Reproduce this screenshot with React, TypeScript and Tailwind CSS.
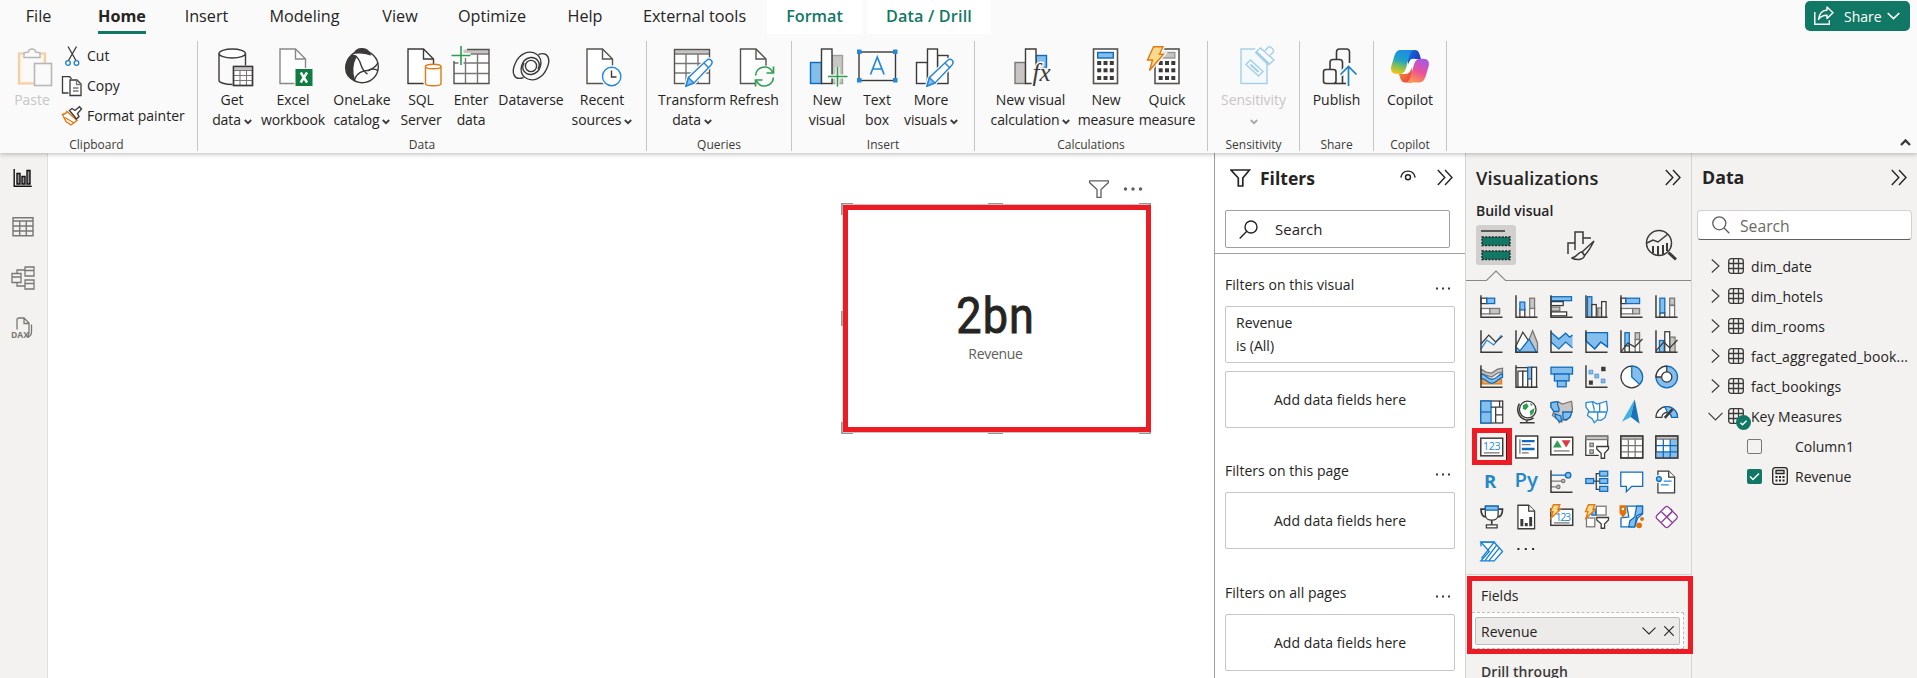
import React from "react";

const DK = "#3b3a38";
const GR = "#797775";
const LG = "#c8c6c4";
const BL = "#0f6cbd";
const LB = "#83beec";
const GN = "#117865";

type Kids = { children: React.ReactNode };

/* ---------- ribbon icons (40 x 40) ---------- */
const Big = ({ children }: Kids) => (
  <svg className="block h-10 w-10 shrink-0 overflow-visible" viewBox="0 0 40 40" fill="none" stroke={DK} strokeWidth="1.4">
    {children}
  </svg>
);

const Doc = ({ x = 6, s = "#55534f" }: { x?: number; s?: string }) => (
  <g transform={`translate(${x} 0)`} stroke={s}>
    <path d="M1 3h15.500l10 10v24.500h-25.500z" fill="#fff" />
    <path d="M16.500 3v10h10" />
  </g>
);

const Pencil = ({ x = 0 }: { x?: number }) => (
  <g transform={`translate(${x} 0)`} stroke="#2488d8" strokeWidth="1.4">
    <path d="M14 40l2.500-8.500L34.500 14.500c3.500-3 7.500 1 4.500 4.500L22 37z" fill="#fff" stroke="#fafafa" strokeWidth="4" />
    <path d="M14 40l2.500-8.500L34.500 14.500c3.500-3 7.500 1 4.500 4.500L22 37z" fill="#fff" />
    <path d="M14 40l2.500-8.500L22 37z" fill={LB} />
    <path d="M32 17l5 5" />
  </g>
);

const GetData = () => (
  <Big>
    <path d="M7 7.500v27c0 2 6 4 13.500 4" />
    <path d="M33.500 7.500v12" />
    <ellipse cx="20.250" cy="7.500" rx="13.250" ry="4.500" fill="#fff" />
    <rect x="21.500" y="20.500" width="19" height="19" fill="#fff" />
    <path d="M22 21h18v3.500h-18z" fill={LG} stroke="none" />
    <path d="M21.500 24.500h19M21.500 29.500h19M21.500 34.500h19M28 24.500v15M34.500 24.500v15" stroke={GR} strokeWidth="1.100" />
    <rect x="21.500" y="20.500" width="19" height="19" />
  </Big>
);
const Excel = () => (
  <Big>
    <Doc x={6} s="#8a8886" />
    <rect x="22" y="22.500" width="18" height="18" rx="1" fill="#107c41" stroke="#fafafa" strokeWidth="1" />
    <path d="M27.700 26.500l6.300 10M34 26.500l-6.300 10" stroke="#fff" strokeWidth="2.400" />
  </Big>
);
const OneLake = () => (
  <Big>
    <circle cx="20.300" cy="20.700" r="16" fill="#fff" stroke={DK} />
    <path d="M12.500 7C15 1 26 1 28 8.500c-5-2-10-2-15.500-1.500z" fill={DK} stroke={DK} />
    <path d="M11 9C1 15 1 30 12.500 34.500c-3-8-2-17 1.500-24z" fill={DK} stroke={DK} />
    <path d="M13 9.500c4 3 5 6 6 9.500s4 8 6.500 9" />
    <path d="M12.500 34c2-7 9-10 14-9.500 5-2 8-4 9.500-8" />
    <path d="M26 24.500c3-2 6-2 10 0" />
  </Big>
);
const Sql = () => (
  <Big>
    <Doc x={6} s="#3b3a38" />
    <path d="M24.500 20.500v17c0 3 15.500 3 15.500 0v-17z" fill="#fff" stroke="#fafafa" strokeWidth="4" />
    <path d="M24.500 20.500v17c0 3 15.500 3 15.500 0v-17" fill="#fff" stroke="#e07a14" />
    <ellipse cx="32.250" cy="20.500" rx="7.750" ry="2.300" fill="#fff" stroke="#e07a14" />
  </Big>
);
const EnterData = () => (
  <Big>
    <path d="M3 3.500h35v34h-35z" fill="#fff" stroke="none" />
    <path d="M12 3.500h26v4.500h-26z" fill={LG} stroke="none" />
    <path d="M3 17h35M3 27.500h35M12 8h26M14.500 12v25.500M26.500 8v29.500" stroke={GR} />
    <path d="M3 15v22.500h35V3.500H16" stroke="#55534f" />
    <path d="M10 0v19M0 9.500h19.500" stroke="#fafafa" strokeWidth="5" />
    <path d="M10 0v19M.500 9.500h19" stroke="#2f9e50" strokeWidth="1.600" />
  </Big>
);
const Dataverse = () => (
  <Big>
    <g strokeWidth="1.400">
      <circle cx="20" cy="20" r="5.600" />
      <path d="M12.500 31.500C3 35 0 27 4 18 8 8 18 3 26 8.500 33 14 30 27 20.500 28.500 14 29 9.500 23 13 17" />
      <path d="M27.500 8.500C37 5 40 13 36 22 32 32 22 37 14 31.500 7 26 10 13 19.500 11.500 26 11 30.500 17 27 23" />
    </g>
  </Big>
);
const Recent = () => (
  <Big>
    <Doc x={4} s="#55534f" />
    <circle cx="29.700" cy="30.500" r="9.200" fill="#fff" stroke="#fafafa" strokeWidth="4" />
    <circle cx="29.700" cy="30.500" r="9.200" fill="#fff" stroke="#2488d8" />
    <path d="M29.500 24.500v6.500h5" />
  </Big>
);
const Transform = () => (
  <Big>
    <path d="M2.500 3.500h35v34h-35z" fill="#fff" stroke="none" />
    <path d="M2.500 3.500h35V8h-35z" fill={LG} stroke="none" />
    <path d="M2.500 8h35M2.500 17.500h35M2.500 27h35M14 8v29.500M26 8v29.500" stroke={GR} />
    <rect x="2.500" y="3.500" width="35" height="34" stroke="#55534f" />
    <Pencil />
  </Big>
);
const Refresh = () => (
  <Big>
    <Doc x={5.500} s="#55534f" />
    <circle cx="30.500" cy="30.500" r="11" fill="#fafafa" stroke="none" />
    <g stroke="#2f9e50" strokeWidth="1.700">
      <path d="M21.700 29.500c0-9 13-12 17-3M39.300 31.500c0 9-13 12-17 3" />
      <path d="M39.500 20.500v6.500h-7M21.500 40.500V34h7" />
    </g>
  </Big>
);
const NewVisual = () => (
  <Big>
    <rect x="25" y="9.500" width="10.500" height="28" fill={LG} stroke="#a19f9d" />
    <rect x="3.500" y="16.500" width="11" height="21" fill={LB} stroke={BL} />
    <rect x="14.500" y="3" width="10.500" height="34.500" fill="#fff" />
    <path d="M30.500 21v19.500M21 30.500h19.500" stroke="#fafafa" strokeWidth="4" />
    <path d="M30.500 21v19.500M21 30.500h19.500" stroke="#2f9e50" strokeWidth="1.600" />
  </Big>
);
const TextBox = () => (
  <Big>
    <rect x="2" y="6" width="36.500" height="28.500" />
    <path d="M13.500 28.500l6.800-17.500 6.800 17.500M15.700 23h9.200" stroke="#2488d8" strokeWidth="1.700" />
    <path d="M0 3.500h4.500v4.500h-4.500zM36 3.500h4.500v4.500h-4.500zM0 32h4.500v4.500h-4.500zM36 32h4.500v4.500h-4.500z" fill="#2488d8" stroke="none" />
  </Big>
);
const MoreVisuals = () => (
  <Big>
    <rect x="5.500" y="16.500" width="11" height="21" fill="#fff" />
    <rect x="26.500" y="9.500" width="10.500" height="28" fill="#fff" />
    <rect x="16.500" y="3" width="10" height="34.500" fill="#fff" />
    <Pencil x={2} />
  </Big>
);
const VisualCalc = () => (
  <Big>
    <rect x="4" y="16.500" width="10.500" height="21" fill={LG} stroke={GR} />
    <rect x="25" y="9.500" width="10.500" height="12" fill={LB} stroke={BL} />
    <path d="M22 37.500h-7.500V3H25v17" fill="#fff" />
    <text x="21.500" y="34.500" fontFamily="'Liberation Serif', serif" fontStyle="italic" fontSize="25" fill={DK} stroke="#fafafa" strokeWidth="3" paintOrder="stroke">
      fx
    </text>
  </Big>
);
const CalcBody = ({ x, gray }: { x: number; gray?: boolean }) => (
  <g transform={`translate(${x} 0)`}>
    <rect x="0" y="3" width="24" height="34.500" fill="#fff" stroke="#55534f" strokeWidth="1.600" />
    <rect x="4.200" y="6.500" width="15.600" height="5.500" fill={gray ? LG : LB} stroke={gray ? "#979593" : BL} />
    {[5.700, 12, 18.300].map((cx) =>
      [17, 24.300, 32].map((cy) => <rect key={`${cx}-${cy}`} x={cx - 2} y={cy - 2} width="4" height="4" fill={DK} stroke="none" />)
    )}
  </g>
);
const NewMeasure = () => (
  <Big>
    <CalcBody x={7.500} />
  </Big>
);
const QuickMeasure = () => (
  <Big>
    <CalcBody x={8} gray />
    <path d="M6.500 .800H16l-3.500 7.500h4L2.500 24.500l3-10.500H.500z" fill="#f9d98c" stroke="#fafafa" strokeWidth="4" />
    <path d="M6.500 .800H16l-3.500 7.500h4L2.500 24.500l3-10.500H.500z" fill="#f9d98c" stroke="#e07a14" />
  </Big>
);
const SensitivityIcon = () => (
  <Big>
    <g stroke="#a3cfe8">
      <rect x="7" y="3" width="26" height="34.500" fill="#f4f9fc" />
      <path d="M16.500 14L29 25.500l-4.500 4.500L12 18.500z" fill="#fafafa" />
      <path d="M16.500 18.500l8 7.500" strokeWidth="2.200" />
      <path d="M22.500 4.500L35.500 17.500l5-4.500-5.500-5.500 3-3-4-4.500-4 3-3.500-2.500z" fill="#fafafa" stroke="#fafafa" strokeWidth="4" />
      <path d="M22 6l4.500-4 13.500 12-5 4.500z" fill="#fafafa" />
      <path d="M22 6l13 12.500" strokeWidth="3" />
      <path d="M31 5l3-3.500c2-2.500 7 2.500 5 5l-3.500 3" fill="#fafafa" />
    </g>
  </Big>
);
const PublishIcon = () => (
  <Big>
    <g strokeWidth="1.600">
      <rect x="6.500" y="23.500" width="12.500" height="14" rx="2.500" />
      <path d="M13 23.500V16.500q0-3 3-3h6.500q3 0 3 3V37" />
      <path d="M19.500 13.500V6.500q0-3.500 3-3.500h7q3 0 3 3v11" />
      <path d="M17 37.500h13" />
      <path d="M31.500 40V21M23.500 28.500l8-8 8 8" stroke="#fafafa" strokeWidth="5" />
      <path d="M31.500 40V21M23.500 28.500l8-8 8 8" stroke="#1f7fbf" strokeWidth="1.700" />
    </g>
  </Big>
);
const CopilotIcon = () => (
  <Big>
    <defs>
      <linearGradient id="cpA" x1="0.600" y1="0" x2="0.300" y2="1">
        <stop offset="0" stopColor="#1b8be8" />
        <stop offset="0.450" stopColor="#21a4c4" />
        <stop offset="0.700" stopColor="#7cc05a" />
        <stop offset="1" stopColor="#f5c518" />
      </linearGradient>
      <linearGradient id="cpB" x1="0.700" y1="0" x2="0.300" y2="1">
        <stop offset="0" stopColor="#a855e8" />
        <stop offset="0.500" stopColor="#e8529a" />
        <stop offset="1" stopColor="#ff9a4a" />
      </linearGradient>
      <linearGradient id="cpC" x1="0" y1="0" x2="1" y2="0.600">
        <stop offset="0" stopColor="#1b6fe0" />
        <stop offset="1" stopColor="#1739b8" />
      </linearGradient>
      <linearGradient id="cpD" x1="0" y1="0" x2="1" y2="1">
        <stop offset="0" stopColor="#f2a024" />
        <stop offset="1" stopColor="#e8364f" />
      </linearGradient>
    </defs>
    <g stroke="none">
      <path d="M18 4h7c4 0 4.500 4 6 9h-6c-4 0-6 2-7 6z" fill="url(#cpC)" />
      <path d="M22 36.500h-7c-4 0-4.500-4-6-8.500h6c4 0 6-3 7-7z" fill="url(#cpD)" />
      <path d="M10.500 4H25c-3 0-4.500 2-5.500 5.500L16 22c-1 3.500-3 6-6 6H7c-5 0-7-3.500-5.500-8.500l3-10C5.700 6 7.500 4 10.500 4z" fill="url(#cpA)" />
      <path d="M29.500 36.500H15c3 0 4.500-2 5.500-5.500L24 18.500c1-3.500 3-5.700 6-5.700h3c5 0 7 3.500 5.500 8l-3 10c-1.200 3.500-3 5.700-6 5.700z" fill="url(#cpB)" />
      <path d="M20.500 13.500c.7-.5 2-.7 4.500-.7-1.500.8-2.300 2-3 4.200l-2.500 8c-.6 2-2 3-6 3 1.700-.8 2.800-2.500 3.500-5z" fill="#fdfdfd" />
    </g>
  </Big>
);
const PasteIcon = () => (
  <Big>
    <rect x="7" y="7.500" width="26" height="30" stroke="#f3cfa4" strokeWidth="2.200" fill="#fdf4e6" />
    <rect x="10.500" y="11" width="19" height="24" fill="#fafafa" stroke="none" />
    <path d="M12 11.500V7q3-1 4.500-1c0-4 7-4 7 0q2 0 4.500 1v4.500z" fill="#fafafa" stroke="#b9b7b5" />
    <rect x="22.500" y="17.500" width="17" height="22" fill="#fafafa" stroke="#b9b7b5" strokeWidth="1.600" />
  </Big>
);

/* ---------- ribbon pieces ---------- */
const Caret = ({ c = DK }: { c?: string }) => (
  <svg className="mt-[3px] block h-[6px] w-[8px] shrink-0" viewBox="0 0 8 6" fill="none" stroke={c} strokeWidth="1.800">
    <path d="M.800 1L4 4.200 7.200 1" />
  </svg>
);

const Btn = ({ w, icon, a, b, caret, off }: { w: string; icon: React.ReactNode; a: string; b?: string; caret?: boolean; off?: boolean }) => (
  <div className={`flex shrink-0 flex-col items-center whitespace-nowrap text-[14px] leading-[20px] ${w} ${off ? "text-[#c8c6c4]" : "text-[#252423]"}`}>
    {icon}
    <span className="mt-[4px] tracking-[-0.05px]">{a}</span>
    <span className="flex h-5 items-center gap-[3px] tracking-[-0.12px]">
      {b}
      {caret && <Caret c={off ? "#a9a7a5" : DK} />}
    </span>
  </div>
);

const Group = ({ w, label, shift = "", children }: { w: string; label: string; shift?: string } & Kids) => (
  <div className={`flex h-[110px] shrink-0 flex-col items-center border-r border-[#c8c6c4] ${w}`}>
    <div className="flex h-[94px] w-full shrink-0 justify-center pt-[5px]">{children}</div>
    <div className={`shrink-0 whitespace-nowrap text-[12px] leading-[19px] text-[#3b3a38] ${shift}`}>{label}</div>
  </div>
);

const tabs: [string, string][] = [
  ["File", "w-[77px]"],
  ["Home", "w-[90px]"],
  ["Insert", "w-[79px]"],
  ["Modeling", "w-[117px]"],
  ["View", "w-[74px]"],
  ["Optimize", "w-[110px]"],
  ["Help", "w-[76px]"],
  ["External tools", "w-[143px]"],
];

const Ribbon = () => (
  <header className="z-10 h-[153px] shrink-0 bg-[#fafafa] shadow-[0_1px_5px_rgba(0,0,0,0.28)]">
    <div className="flex h-[34px] text-[16.200px] text-[#252423]">
      {tabs.map(([t, w]) => (
        <div key={t} className={`flex shrink-0 justify-center whitespace-nowrap leading-[32px] ${w}`}>
          {t === "Home" ? <span className="h-[34px] border-b-[3px] border-[#117865] font-bold">{t}</span> : t}
        </div>
      ))}
      <div className="ml-px w-[95px] bg-white text-center font-semibold leading-[32px] text-[#117865]">Format</div>
      <div className="ml-[5px] w-[124px] bg-white text-center font-semibold tracking-[0.15px] leading-[32px] text-[#117865]">Data / Drill</div>
      <div className="mt-px mr-[7px] ml-auto flex h-[30px] w-[105px] items-center rounded-[5px] bg-[#117865] pl-[9px] text-[14px] text-white">
        <svg className="h-5 w-5" viewBox="0 0 20 20" fill="none" stroke="#fff" strokeWidth="1.400">
          <path d="M.8 6v12.300h14.500v-4" />
          <path d="M13 1l6 5.700-6 5.800V9.300c-3.500 0-6.500.7-8.500 4.200C5 8 8.500 4.500 13 4z" strokeLinejoin="round" />
        </svg>
        <span className="ml-[10px]">Share</span>
        <svg className="ml-[5px] h-[8px] w-[13px]" viewBox="0 0 13 8" fill="none" stroke="#fff" strokeWidth="1.700">
          <path d="M.7 1l5.800 5.500L12.300 1" />
        </svg>
      </div>
    </div>
    <div className="mt-[7px] flex">
      <Group w="w-[198px]" label="Clipboard" shift="-ml-[4px]">
        <div className="flex w-full">
          <Btn w="w-[64px]" icon={<PasteIcon />} a="Paste" off />
          <div className="-mt-[5px] flex flex-col text-[14px] leading-[30px] text-[#252423]">
            <div className="flex h-[30px] items-center gap-[4px]">
              <svg className="h-5 w-[19px]" viewBox="0 0 19 20" fill="none" stroke={DK} strokeWidth="1.300">
                <path d="M4 .5l8 14M12.500 .5l-8 14" />
                <circle cx="4" cy="17" r="2.300" stroke="#1f7fbf" />
                <circle cx="12.500" cy="17" r="2.300" stroke="#1f7fbf" />
              </svg>
              Cut
            </div>
            <div className="flex h-[30px] items-center gap-[5px]">
              <svg className="-ml-[2px] h-5 w-5 overflow-visible" viewBox="0 0 20 20" fill="#fff" stroke={DK} strokeWidth="1.300">
                <path d="M6.500 17H.500V.700H7.500l2 2" />
                <path d="M8 4h7l4 4v11.500H8z" />
                <path d="M14.500 4v4.500h4.500M11 12h5.500M11 15h5.500" fill="none" stroke={GR} />
              </svg>
              Copy
            </div>
            <div className="flex h-[30px] items-center gap-[5px]">
              <svg className="-ml-[2px] h-5 w-5 overflow-visible" viewBox="0 0 20 20" fill="#fff" strokeWidth="1.400">
                <path d="M5 5.500L15 14.500 9 19 4 15.500 .5 8.500C3 8 4.500 7 5 5.500z" stroke="#e07a14" />
                <path d="M3 11.500l9 5.500" stroke="#e07a14" fill="none" />
                <path d="M7.500 4.500l2.500-2 3 2L17.500.700l2 2.300-4 4.500 1.500 3-2.500 2.500z" stroke={DK} />
              </svg>
              Format painter
            </div>
          </div>
        </div>
      </Group>
      <Group w="w-[449px]" label="Data">
        <Btn w="w-[62px]" icon={<GetData />} a="Get" b="data" caret />
        <Btn w="w-[60px]" icon={<Excel />} a="Excel" b="workbook" />
        <Btn w="w-[78px]" icon={<OneLake />} a="OneLake" b="catalog" caret />
        <Btn w="w-[40px]" icon={<Sql />} a="SQL" b="Server" />
        <Btn w="w-[60px]" icon={<EnterData />} a="Enter" b="data" />
        <Btn w="w-[60px]" icon={<Dataverse />} a="Dataverse" />
        <Btn w="w-[82px]" icon={<Recent />} a="Recent" b="sources" caret />
      </Group>
      <Group w="w-[145px]" label="Queries">
        <div className="flex w-full pl-[3px]">
          <Btn w="w-[84px]" icon={<Transform />} a="Transform" b="data" caret />
          <Btn w="w-[40px]" icon={<Refresh />} a="Refresh" />
        </div>
      </Group>
      <Group w="w-[183px]" label="Insert">
        <div className="flex w-full pl-[10px]">
          <Btn w="w-[50px]" icon={<NewVisual />} a="New" b="visual" />
          <Btn w="w-[50px]" icon={<TextBox />} a="Text" b="box" />
          <Btn w="w-[58px]" icon={<MoreVisuals />} a="More" b="visuals" caret />
        </div>
      </Group>
      <Group w="w-[233px]" label="Calculations">
        <div className="flex w-full pl-[3px]">
          <Btn w="w-[105px]" icon={<VisualCalc />} a="New visual" b="calculation" caret />
          <Btn w="w-[46px]" icon={<NewMeasure />} a="New" b="measure" />
          <Btn w="w-[76px]" icon={<QuickMeasure />} a="Quick" b="measure" />
        </div>
      </Group>
      <Group w="w-[92px]" label="Sensitivity">
        <Btn w="w-[91px]" icon={<SensitivityIcon />} a="Sensitivity" caret off />
      </Group>
      <Group w="w-[74px]" label="Share">
        <Btn w="w-[73px]" icon={<PublishIcon />} a="Publish" />
      </Group>
      <Group w="w-[73px]" label="Copilot">
        <Btn w="w-[72px]" icon={<CopilotIcon />} a="Copilot" />
      </Group>
      <svg className="mt-[97px] mr-[6px] ml-auto h-[8px] w-[11px]" viewBox="0 0 11 8" fill="none" stroke={DK} strokeWidth="2.300">
        <path d="M1 7l4.500-4.500L10 7" />
      </svg>
    </div>
  </header>
);

/* ---------- left rail ---------- */
const Rail = () => (
  <nav className="flex w-12 shrink-0 flex-col items-center border-r border-[#e1dfdd] bg-[#f3f2f1] pr-[2px]">
    <svg className="mt-[15px] h-[20px] w-[20px]" viewBox="0 0 20 20" fill="#9a9896" stroke="#111" strokeWidth="1.400">
      <path d="M1.200 1v17.300h17.500" fill="none" />
      <path d="M4 5.500h3v10.500h-3zM9 8.500h3v7.500h-3zM14 2.500h3v13.500h-3z" />
    </svg>
    <svg className="mt-[29px] h-[20px] w-[22px]" viewBox="0 0 22 20" fill="none" stroke="#797775" strokeWidth="1.400">
      <path d="M1 .800h20v18h-20zM1 4h20M1 9h20M1 14h20M7.700 4v15M14.300 4v15" />
    </svg>
    <svg className="mt-[29px] h-[24px] w-[24px]" viewBox="0 0 24 24" fill="none" stroke="#797775" strokeWidth="1.300">
      <path d="M1 7.500h9v9h-9zM1 11h9M14 1h9v9h-9zM14 4.500h9M14 14h9v9h-9zM14 17.500h9M6 7.500V4h8M6 16.500V20h8" />
    </svg>
    <svg className="mt-[27px] h-[22px] w-[24px]" viewBox="0 0 24 22" fill="none" stroke="#797775" strokeWidth="1.300">
      <path d="M6 12.500V3q0-2 2-2h5l5 5v9q0 4-2.500 5M13 1v5.500h5M20.500 7.500v7c0 3-1.500 5-3.500 5.500" />
      <text x="0" y="20.500" fontFamily="'Open Sans', sans-serif" fontWeight="700" fontSize="8.500" fill="#797775" stroke="none">
        DAX
      </text>
    </svg>
  </nav>
);

/* ---------- canvas ---------- */
const Canvas = () => (
  <main className="relative w-[1166px] shrink-0 bg-white">
    <div className="absolute top-[27px] left-[1041px] flex items-center gap-[14px]">
      <svg className="h-[18px] w-[20px]" viewBox="0 0 20 18" fill="none" stroke="#605e5c" strokeWidth="1.300">
        <path d="M.500 .800h19v1.700L12 9.500v7.800H8V9.500L.500 2.500z" />
      </svg>
      <svg className="h-[4px] w-[20px]" viewBox="0 0 20 4" fill="#605e5c">
        <circle cx="2.500" cy="2" r="1.700" />
        <circle cx="10" cy="2" r="1.700" />
        <circle cx="17.500" cy="2" r="1.700" />
      </svg>
    </div>
    <div className="absolute top-[50px] left-[793px] h-[231px] w-[310px]">
      <svg className="absolute inset-0 h-full w-full" viewBox="0 0 310 231" fill="none" stroke="#979593" strokeWidth="3">
        <path d="M1.500 12V1.500H12M147 1.500h15M298 1.500h10.500V12M308.500 108v15M308.500 219v10.500H298M162 229.500h-15M12 229.500H1.500V219M1.500 123v-15" />
        <path d="M2 1.500h306v228H2z" stroke="#c8c6c4" strokeWidth="1" />
      </svg>
      <div className="absolute top-[2px] left-[2px] flex h-[227px] w-[308px] flex-col items-center border-[5px] border-[#ed1c24] bg-white pr-[3px]">
        <div className="mt-[76px] scale-x-[0.9] font-['Roboto'] text-[50px] leading-[60px] tracking-[1.2px] text-[#252423] [-webkit-text-stroke:0.9px_#252423]">2bn</div>
        <div className="-mt-[2px] text-[14px] leading-[20px] tracking-[-0.3px] text-[#605e5c]">Revenue</div>
      </div>
    </div>
  </main>
);

const Chevrons = () => (
  <svg className="h-[17px] w-[16px]" viewBox="0 0 16 17" fill="none" stroke="#252423" strokeWidth="1.400">
    <path d="M.800 1l7 7.500-7 7.500M8 1l7 7.500L8 16" />
  </svg>
);

/* ---------- filters ---------- */
const FilterHead = ({ t }: { t: string }) => (
  <div className="flex h-[21px] items-center justify-between pr-[5px] text-[14px] leading-[21px] tracking-[0.04px]">
    {t}
    <svg className="mt-[7px] h-[3px] w-[14px]" viewBox="0 0 14 3" fill="#3b3a38">
      <path d="M0 .500h2v2h-2zM6 .500h2v2h-2zM12 .500h2v2h-2z" />
    </svg>
  </div>
);
const DropBox = () => (
  <div className="flex h-[57px] items-center justify-center rounded-[2px] border border-[#c8c6c4] text-[14px] tracking-[0.06px]">Add data fields here</div>
);
const Filters = () => (
  <section className="w-[251px] shrink-0 border-l border-[#a19f9d] bg-white text-[#252423]">
    <div className="flex h-[57px] items-center pr-[12px] pb-[8px] pl-[15px]">
      <svg className="h-[18px] w-[21px]" viewBox="0 0 21 18" fill="none" stroke="#252423" strokeWidth="1.700">
        <path d="M1 1h18.500L12.800 9v8h-4.500V9z" />
      </svg>
      <span className="mt-px ml-[9px] text-[17.500px] font-bold">Filters</span>
      <svg className="mr-[21px] mb-[4px] ml-auto h-[12px] w-[16px]" viewBox="0 0 16 12" fill="none" stroke="#252423" strokeWidth="1.400">
        <path d="M.800 7.500C2.500-1 13.500-1 15.200 7.500" />
        <circle cx="8" cy="7.300" r="2.500" />
      </svg>
      <Chevrons />
    </div>
    <div className="mx-[10px] flex h-[38px] w-[225px] items-center rounded-[2px] border border-[#a19f9d] pl-[13px] text-[15px]">
      <svg className="h-[19px] w-[19px]" viewBox="0 0 19 19" fill="none" stroke="#252423" strokeWidth="1.400">
        <circle cx="12" cy="7" r="6" />
        <path d="M7.800 11.300L.700 18.500" />
      </svg>
      <span className="ml-[17px]">Search</span>
    </div>
    <div className="mt-[5px] border-t border-[#a19f9d] pt-[20px] pr-[10px] pl-[10px]">
      <FilterHead t="Filters on this visual" />
      <div className="mt-[11px] h-[57px] rounded-[2px] border border-[#c8c6c4] pt-[4px] pl-[10px] text-[14px] leading-[23px]">
        <div>Revenue</div>
        <div>is (All)</div>
      </div>
      <div className="mt-[8px]">
        <DropBox />
      </div>
      <div className="mt-[32px]">
        <FilterHead t="Filters on this page" />
      </div>
      <div className="mt-[11px]">
        <DropBox />
      </div>
      <div className="mt-[33px]">
        <FilterHead t="Filters on all pages" />
      </div>
      <div className="mt-[11px]">
        <DropBox />
      </div>
    </div>
  </section>
);

/* ---------- visualization gallery (24 x 24 icons) ---------- */
const Axis = () => <path d="M1 0v22.500h22" stroke={DK} fill="none" strokeWidth="1.500" />;
const Blue = { fill: LB, stroke: BL };
const Gray = { fill: LG, stroke: GR };
const White = { fill: "#fff", stroke: DK };
const Bolt = () => <path d="M3.500-.500h6.500L8 4.500h2.500L1 13l2-6.500H.500z" fill="#f9d98c" stroke="#e07a14" strokeWidth="1.400" />;
const Frame = ({ y = 0.800, h = 22.400 }: { y?: number; h?: number }) => <rect x="0.800" y={y} width="22.400" height={h} fill="#fff" stroke={DK} strokeWidth="1.500" />;
const LandBase = ({ fill, stroke }: { fill: string; stroke: string }) => (
  <path d="M1 2.500l7-1 4.500 2.500 9.500-3 1 8.500-2.500 8-4 3-4-.500-3 3-2-4-5-3.500L4 11 1 7z" fill={fill} stroke={stroke} />
);

const gallery: React.ReactNode[] = [
  <><rect x="1" y="3" width="6" height="5.500" {...White} /><rect x="7" y="3" width="8" height="5.500" {...Blue} /><rect x="1" y="13.500" width="9" height="5.500" {...White} stroke={GR} /><rect x="10" y="13.500" width="10" height="5.500" {...Gray} /><Axis /></>,
  <><rect x="5" y="14" width="5" height="8.500" {...White} /><rect x="5" y="7" width="5" height="8" {...Blue} /><rect x="15" y="13" width="5" height="9.500" {...White} stroke={GR} /><rect x="15" y="3" width="5" height="10.500" {...Gray} /><Axis /></>,
  <><rect x="1" y="1.500" width="21" height="4" {...Blue} /><rect x="1" y="6.500" width="12.500" height="4" {...White} /><rect x="1" y="12" width="9" height="4" {...Gray} /><rect x="1" y="17" width="16" height="4" {...White} /><Axis /></>,
  <><rect x="2.500" y="1.500" width="4.500" height="21" {...Blue} /><rect x="7" y="9.500" width="4.500" height="13" {...White} /><rect x="13" y="13" width="4" height="9.500" {...Gray} /><rect x="17" y="6.500" width="4.500" height="16" {...White} /><Axis /></>,
  <><rect x="1" y="3" width="5" height="5.500" {...White} /><rect x="6" y="3" width="14" height="5.500" {...Blue} /><rect x="1" y="13.500" width="12" height="5.500" {...White} stroke={GR} /><rect x="13" y="13.500" width="7" height="5.500" {...Gray} /><Axis /></>,
  <><rect x="5" y="18" width="5" height="4.500" {...White} /><rect x="5" y="3" width="5" height="15" {...Blue} /><rect x="15" y="10.500" width="5" height="12" {...White} stroke={GR} /><rect x="15" y="3" width="5" height="7" {...Gray} /><Axis /></>,

  <><path d="M1 19l6-9 7 5 8-10" stroke="#2488d8" fill="none" /><path d="M1 14l8-9 7 7 7-6" stroke={DK} fill="none" /><Axis /></>,
  <><path d="M9 22.500l9-22L23 13v9.500z" {...Gray} /><path d="M1 16L8 2l8 12-6 8.500H1z" {...White} /><path d="M1 17l4 4L14.500 9 22 22.500H1z" {...Blue} /><Axis /></>,
  <><path d="M1 2l8 7 7-6 4 4 3-2v13l-7-6-7 7-8-7z" fill={LB} stroke="none" /><path d="M1 2l8 7 7-6 4 4 3-2M1 12l8 7 7-7 7 6" stroke={BL} fill="none" /><Axis /></>,
  <><path d="M1 2.500h22V17l-7-5-6 7-9-8z" {...Blue} /><path d="M1 11l9 8 6-7 7 5" stroke={BL} fill="none" /><Axis /></>,
  <><rect x="5" y="2.500" width="4.500" height="15" {...Blue} /><rect x="5" y="16" width="4.500" height="6.500" {...White} /><rect x="15.500" y="2.500" width="4.500" height="7" {...Gray} /><rect x="15.500" y="9.500" width="4.500" height="13" {...White} stroke={GR} /><path d="M1 22l7-9 7 4 8-8" stroke={DK} fill="none" /><Axis /></>,
  <><rect x="4.500" y="10.500" width="5" height="12" {...Blue} /><rect x="10" y="1.500" width="5" height="21" {...White} /><rect x="15.500" y="7" width="5" height="15.500" {...Gray} /><path d="M1 21l8-9 6 6 8-8" stroke={DK} fill="none" /><Axis /></>,

  <><path d="M2 14.500h20v4.500H2z" fill="#f3a052" stroke="#e07a14" /><path d="M1 4l5 3 6 1 6-4 5-1v4l-5 1-6 4-6-2-5-2z" {...Gray} /><path d="M1 9.500c5-1 6 5 11 5s6-5 11-6v4c-5 1-6 6-11 6S6 13 1 13.500z" {...Blue} /><Axis /></>,
  <><rect x="3" y="6" width="5" height="16.500" {...White} /><rect x="8" y="6" width="5" height="16.500" {...White} /><path d="M1 2.500h12V6" stroke={DK} fill="none" /><rect x="13" y="2" width="4" height="12" {...Blue} /><rect x="17" y="2" width="5" height="20.500" {...White} /><Axis /></>,
  <><rect x="1" y="2" width="22" height="7" {...Blue} /><rect x="4.500" y="9" width="15" height="7" {...Blue} /><rect x="7.500" y="16" width="9" height="6" {...Blue} /></>,
  <><path d="M4 5h4v4H4zM10 9h4v4h-4zM16.500 14h4v4h-4z" fill={LB} stroke={BL} strokeWidth=".5" /><path d="M16.500 1.500h4.500V6h-4.500zM4 15.500h4V20H4z" fill={DK} stroke="none" /><Axis /></>,
  <><circle cx="12" cy="12" r="11" {...White} /><path d="M12 1a11 11 0 0 1 8 18.500L12 12z" {...Blue} /></>,
  <><circle cx="12" cy="12" r="11" {...Blue} /><path d="M12 1v6A5 5 0 0 0 7 12H1A11 11 0 0 1 12 1z" {...White} /><circle cx="12" cy="12" r="5.200" {...White} /></>,

  <><rect x="0.800" y="0.800" width="22.400" height="22.400" {...White} /><rect x="0.800" y="0.800" width="10.500" height="22.400" {...Blue} /><path d="M.800 12h10.500" stroke={BL} fill="none" /><path d="M11.300 7h12M16 7v16M16 15h7.500M20 0.500V7" stroke={DK} fill="none" /></>,
  <><circle cx="13" cy="9.500" r="8.500" {...White} /><path d="M8 5l4-2 2 3-3 4-3-1zM15 11l5-3-1 5-3 3zM15 3l3 1-1 2z" fill="#2f9e50" stroke="none" /><path d="M4.500 3.500C1 9 3 18 11 20c4 .500 6-.500 8-2M12 20v3M5 23h15" stroke={DK} fill="none" strokeWidth="1.600" /></>,
  <><LandBase fill={LG} stroke={GR} /><path d="M1 2.500l7-1c-2 5 3 5 1 10H4L1 7z" {...Blue} /><path d="M13 12h9.500l-2 5-4 3-3-1z" {...Blue} /><path d="M5 14l6 2 1 6-3-1-3-3z" {...Blue} /></>,
  <><LandBase fill="#fff" stroke="#2488d8" /><path d="M8 1.500C7 7 11 7 9 12H4M9 12h13M13 12v8M15 3v9" stroke="#2488d8" fill="none" /></>,
  <><path d="M15-1L2 22l9-5z" fill="#41b1e0" stroke="none" /><path d="M15-1l5 25-9-7z" fill="#1a73b8" stroke="none" /></>,
  <><path d="M1 17.500a11 11 0 0 1 22 0h-6a5 5 0 0 0-10 0z" {...White} /><path d="M10 6.700A11 11 0 0 1 23 17.500h-6a5 5 0 0 0-4-4.500z" {...Blue} /><path d="M10 18l8-9" stroke={DK} strokeWidth="2.500" fill="none" /></>,

  <><Frame y={3} h={18} /><text x="3" y="15.500" fontFamily="'Open Sans', sans-serif" fontSize="11" textLength="18" fill="#2488d8" stroke="none">123</text><path d="M4 18h16" stroke={GR} fill="none" /></>,
  <><Frame /><path d="M5 4v15" stroke={GR} fill="none" /><path d="M7 6h13M7 14h13" stroke={BL} fill="none" strokeWidth="2.500" /><path d="M7 9.500h9M7 18h7" stroke={GR} fill="none" /></>,
  <><Frame y={2} h={18} /><path d="M3 12.500L7.500 5l4.500 7.500z" fill="#2f9e50" stroke="none" /><path d="M12 5h9l-4.500 7.500z" fill="#e03a3a" stroke="none" /><path d="M4 16h16" stroke={GR} fill="none" /></>,
  <><path d="M14 20.500H.800V.800h22.400V11" {...White} /><path d="M1 1h22v3.500H1z" {...Gray} /><path d="M5 8h3.500v3.500H5zM5 15h3.500v3.500H5z" {...Gray} /><path d="M12 11.500h12v2.500l-4 4.500v5h-3.500v-5L12 14z" {...White} /></>,
  <><Frame /><path d="M1 1h22v3H1z" {...Gray} /><path d="M1 10.500h22M1 17h22M8.500 4v19M15.500 4v19" stroke={GR} fill="none" /><rect x="0.800" y="0.800" width="22.400" height="22.400" fill="none" stroke={DK} /></>,
  <><Frame /><path d="M15.500 4H23v19H1v-6h14.500z" fill={LB} stroke="none" /><path d="M1 1h22v3H1z" {...Gray} /><path d="M1 10.500h22M1 17h22M8.500 4v19M15.500 4v19" stroke={BL} fill="none" /><rect x="0.800" y="0.800" width="22.400" height="22.400" fill="none" stroke={DK} /></>,

  <text x="4" y="18.500" fontFamily="'Open Sans', sans-serif" fontWeight="700" fontSize="19" fill="#2488c8" stroke="none">R</text>,
  <text x="-0.500" y="17" fontFamily="'Open Sans', sans-serif" fontWeight="600" fontSize="21" textLength="24" lengthAdjust="spacingAndGlyphs" fill="#2488c8" stroke="none">Py</text>,
  <><path d="M1 5h15" stroke={BL} fill="none" /><circle cx="18.500" cy="5" r="2.800" {...Blue} /><path d="M1 11h11M1 17h6" stroke={GR} fill="none" /><circle cx="13.500" cy="11" r="1.700" {...Gray} /><circle cx="8.500" cy="17" r="1.700" {...Gray} /><Axis /></>,
  <><path d="M8 11h7M11.500 11V3.500H15M11.500 11v8.500H15" stroke={DK} fill="none" /><rect x="0.800" y="8.500" width="8" height="5" {...Blue} /><rect x="15" y="1" width="8.200" height="5" {...Blue} /><rect x="15" y="8.500" width="8.200" height="5" {...Blue} /><rect x="15" y="16.500" width="8.200" height="5" {...Blue} /></>,
  <path d="M.800 2h22.400v14.500H12l-5.500 5.500v-5.500H.800z" fill="#fff" stroke={BL} />,
  <><path d="M3 5V1h11l6 6v16H3V13" {...White} /><path d="M14 1v6h6" {...White} /><circle cx="4" cy="9" r="2.500" {...Blue} /><path d="M9 11h8M6 15h8" stroke="#2488d8" fill="none" /></>,

  <><path d="M5.500 4H1c0 5 2 8 6 8M18.500 4H23c0 5-2 8-6 8M12 15v5" stroke={DK} fill="none" strokeWidth="1.700" /><path d="M5.500 1h13v9c0 7-13 7-13 0z" {...White} /><path d="M5.500 1h13v4h-13z" {...Blue} /><path d="M6.500 20h11v3h-11z" {...White} /></>,
  <><path d="M3 0h11l6 6v18H3z" {...White} /><path d="M14 0v6h6" {...White} /><path d="M5.500 14h3v7.500h-3zM10 18h3v3.500h-3zM14.500 12h3v9.500h-3z" fill={DK} stroke="none" /></>,
  <><Frame y={4} h={16.500} /><text x="5.500" y="16.500" fontFamily="'Open Sans', sans-serif" fontSize="11" textLength="16" fill="#2488d8" stroke="none">123</text><path d="M4 18h16" stroke={GR} fill="none" /><Bolt /></>,
  <><rect x="11.500" y="1" width="10" height="9" {...White} stroke={GR} /><path d="M7 4h4v6H7z" {...Blue} /><rect x="1.500" y="13" width="8.500" height="9" {...White} stroke={GR} /><path d="M12 12.500h12V15l-4 4v4.500h-3.500V19L12 15z" {...White} /><Bolt /></>,
  <><path d="M7 1h16v8l-5 4-3 9H1V13l8-1z" fill="#fff" stroke={BL} /><path d="M17 1h6v7l-6 3-2 11H9l1-6 5-4z" fill={LB} stroke={BL} /><path d="M-.500 0h7v8L3 13-.500 8z" fill="#e0720a" stroke="none" /><circle cx="3" cy="3.800" r="1.300" fill="#fff" stroke="none" /><circle cx="19.500" cy="20.500" r="3" fill="#e0720a" stroke="none" /><circle cx="22.500" cy="14" r="2" fill="#e0720a" stroke="none" /></>,
  <g stroke="#8f3a9c" fill="#fff" strokeLinejoin="round"><path d="M10.500 1.800q1.500-1.200 3 0L22.200 10.500q1.200 1.500 0 3L13.500 22.200q-1.500 1.200-3 0L1.800 13.500q-1.200-1.500 0-3z" /><path d="M6.600 6.600L12 12l5.400 5.400M12 12l-5.400 5.400M12 12l4-4q2.500-2.500 0-4.500M12 12l-3.500-3.500" fill="none" /><path d="M17.400 6.600L12 12" /></g>,

  <g stroke="#0f7fdc" fill="#fff" transform="translate(0 1)"><path d="M1 1h13.500l8.500 9.500L14.500 20H1l8.500-9.500z" /><path d="M1 5V1l2 0 11.500 0L1.500 17.500M9 20L20 6.500M5 20L17 4" fill="none" /></g>,
  <path d="M2.500 8h2v2h-2zM10 8h2v2h-2zM17.500 8h2v2h-2z" fill="#252423" stroke="none" />,
];

const Visualizations = () => (
  <section className="w-[227px] shrink-0 border-x border-[#d6d4d2] bg-[#f3f2f1] text-[#252423]">
    <div className="flex h-[49px] items-center justify-between pr-[10px] pl-[10px] text-[18.300px] font-semibold tracking-[0.1px]">
      Visualizations
      <Chevrons />
    </div>
    <div className="pl-[10px] text-[14px] leading-[18px] font-semibold">Build visual</div>
    <div className="mt-[5px] flex h-[40px] pl-[10px]">
      <div className="flex h-10 w-10 items-center justify-center rounded-[3px] bg-[#d2d0ce]">
        <svg className="h-[32px] w-[32px]" viewBox="0 0 32 32" fill={GN} stroke="#252423" strokeWidth="1.400">
          <path d="M1 2h24" />
          <path d="M2 8h28v8.500H2zM2 22h28v8.500H2z" strokeDasharray="2 1.300" />
        </svg>
      </div>
      <svg className="mt-[5px] ml-[50px] h-[30px] w-[30px] overflow-visible" viewBox="0 0 30 30" fill="none" stroke="#3b3a38" strokeWidth="1.500">
        <path d="M2 24V13h7V2h8v12M9 13v7M17 8h8" />
        <path d="M28 11L16 22l2.500 3.500C22 22 25 17 28 11z" fill="#f3f2f1" />
        <path d="M16 22c-4-.500-5 6-10.500 6C12 31 18 29 18.500 25.500z" fill="#f3f2f1" />
      </svg>
      <svg className="mt-[4px] ml-[49px] h-[32px] w-[32px]" viewBox="0 0 32 32" fill="none" stroke="#3b3a38" strokeWidth="1.500">
        <circle cx="14" cy="14" r="12.500" />
        <path d="M2 14l6-3 5 2 10-8" />
        <path d="M8 24v-7M13 26v-9M18 25V16M22 22v-8" strokeWidth="2" />
        <path d="M23.500 23.500l7.500 7" strokeWidth="3" />
      </svg>
    </div>
    <svg className="mt-[5px] block h-[12px] w-[225px]" viewBox="0 0 225 12" fill="none" stroke="#8a8886" strokeWidth="1.200">
      <path d="M0 10.500h20.500L30 1l9.500 9.500H225" />
    </svg>
    <div className="relative mt-[13px] grid w-[210px] auto-rows-[35px] grid-cols-[repeat(6,35px)] pl-[14px]">
      {gallery.map((g, i) => (
        <svg key={i} className="h-6 w-[23.500px] overflow-visible" viewBox="0 0 24 24" strokeWidth="1.300">
          {g}
        </svg>
      ))}
      <div className="absolute top-[133px] left-[6px] h-[37px] w-[40px] border-[5px] border-[#ed1c24]">
        <div className="ml-auto h-full w-px bg-[#252423]" />
      </div>
    </div>
    <div className="-mt-px border-t border-[#d6d4d2]" />
    <div className="relative mt-px -mr-[2px] ml-px h-[78px] w-[226px] border-[5px] border-[#ed1c24] pt-[4px] text-[14px]">
      <div className="pl-[9px] leading-[22px]">Fields</div>
      <div className="mt-[5px] mr-[4px] border-y border-r border-dashed border-[#c0bebc] bg-white p-[3px] pt-[4px]">
        <div className="flex h-[28px] w-[205px] items-center rounded-[2px] border border-[#bebbb8] bg-[#edebe9] pl-[5px]">
          Revenue
          <svg className="mr-[8px] ml-auto h-[8px] w-[14px]" viewBox="0 0 14 8" fill="none" stroke="#252423" strokeWidth="1.100">
            <path d="M.500 .700L7 7l6.500-6.300" />
          </svg>
          <svg className="mr-[5px] h-[10px] w-[10px]" viewBox="0 0 10 10" fill="none" stroke="#252423" strokeWidth="1.200">
            <path d="M.300 .300l9.400 9.400M9.700 .300L.300 9.700" />
          </svg>
        </div>
      </div>
    </div>
    <div className="mt-[8px] pl-[15px] text-[14px] leading-[20px] font-semibold tracking-[0.05px] text-[#3b3a38]">Drill through</div>
  </section>
);

/* ---------- data pane ---------- */
const TableIcon = () => (
  <svg className="h-4 w-4" viewBox="0 0 16 16" fill="none" stroke="#3b3a38" strokeWidth="1.300">
    <rect x="0.700" y="0.700" width="14.600" height="14.600" rx="2.500" />
    <path d="M5.500 .700v14.600M10.500 .700v14.600M.700 5.500h14.600M.700 10.500h14.600" />
  </svg>
);
const Data = () => (
  <section className="min-w-0 flex-1 overflow-hidden bg-[#f3f2f1] text-[#252423]">
    <div className="flex h-[49px] items-center justify-between pr-[10px] pl-[10px] text-[17.800px] font-bold">
      Data
      <Chevrons />
    </div>
    <div className="mt-[8px] ml-[5px] flex h-[30px] w-[215px] items-center rounded-[4px] border border-[#d1d1d1] border-b-[#605e5c] bg-white pl-[14px] text-[15.700px] text-[#6b6967]">
      <svg className="h-[18px] w-[18px]" viewBox="0 0 18 18" fill="none" stroke="#605e5c" strokeWidth="1.300">
        <circle cx="7.300" cy="7.300" r="6.500" />
        <path d="M12 12l5.300 5.300" />
      </svg>
      <span className="mt-[4px] ml-[10px]">Search</span>
    </div>
    <div className="mt-[11px] text-[14px]">
      {["dim_date", "dim_hotels", "dim_rooms", "fact_aggregated_book...", "fact_bookings"].map((n) => (
        <div key={n} className="flex h-[30px] items-center pl-[19px] whitespace-nowrap">
          <svg className="h-[14px] w-[9px]" viewBox="0 0 9 14" fill="none" stroke="#3b3a38" strokeWidth="1.100">
            <path d="M.800 .500L8 7 .800 13.500" />
          </svg>
          <span className="mr-[7px] ml-[8px]">
            <TableIcon />
          </span>
          <span className={n.endsWith("...") ? "tracking-[0.150px]" : "tracking-[0.06px]"}>{n}</span>
        </div>
      ))}
      <div className="flex h-[30px] items-center pl-[16px]">
        <svg className="h-[9px] w-[15px]" viewBox="0 0 15 9" fill="none" stroke="#3b3a38" strokeWidth="1.100">
          <path d="M.500 .800L7.500 8l7-7.200" />
        </svg>
        <span className="relative mr-[7px] ml-[5px]">
          <TableIcon />
          <svg className="absolute top-[7px] left-[8px] h-[15px] w-[15px]" viewBox="0 0 15 15" fill="none">
            <circle cx="7.500" cy="7.500" r="7.500" fill={GN} />
            <path d="M4.500 7.700l2 2 4-4" stroke="#fff" strokeWidth="1.500" />
          </svg>
        </span>
        Key Measures
      </div>
      <div className="flex h-[30px] items-center pl-[55px]">
        <span className="h-[15px] w-[15px] rounded-[2px] border border-[#797775]" />
        <span className="ml-[33px]">Column1</span>
      </div>
      <div className="flex h-[30px] items-center pl-[55px]">
        <svg className="h-[15px] w-[15px]" viewBox="0 0 15 15" fill="none">
          <rect width="15" height="15" rx="2" fill={GN} />
          <path d="M3 7.500l3 3 6-6" stroke="#fff" strokeWidth="1.400" />
        </svg>
        <svg className="ml-[10px] h-[18px] w-[16px]" viewBox="0 0 16 18" fill="none" stroke="#252423" strokeWidth="1.300">
          <rect x="0.700" y="0.700" width="14.600" height="16.600" rx="2.500" />
          <path d="M4 3.500h8v3H4z" />
          <path d="M3.500 9h2v2h-2zM7 9h2v2H7zM10.500 9h2v2h-2zM3.500 12.500h2v2h-2zM7 12.500h2v2H7zM10.500 12.500h2v2h-2z" fill="#252423" stroke="none" />
        </svg>
        <span className="ml-[7px]">Revenue</span>
      </div>
    </div>
  </section>
);

export default function App() {
  return (
    <div className="flex h-[678px] w-[1917px] flex-col overflow-hidden bg-white font-['Open_Sans','Noto_Sans',sans-serif]">
      <Ribbon />
      <div className="flex min-h-0 flex-1 overflow-hidden">
        <Rail />
        <Canvas />
        <Filters />
        <Visualizations />
        <Data />
      </div>
    </div>
  );
}
